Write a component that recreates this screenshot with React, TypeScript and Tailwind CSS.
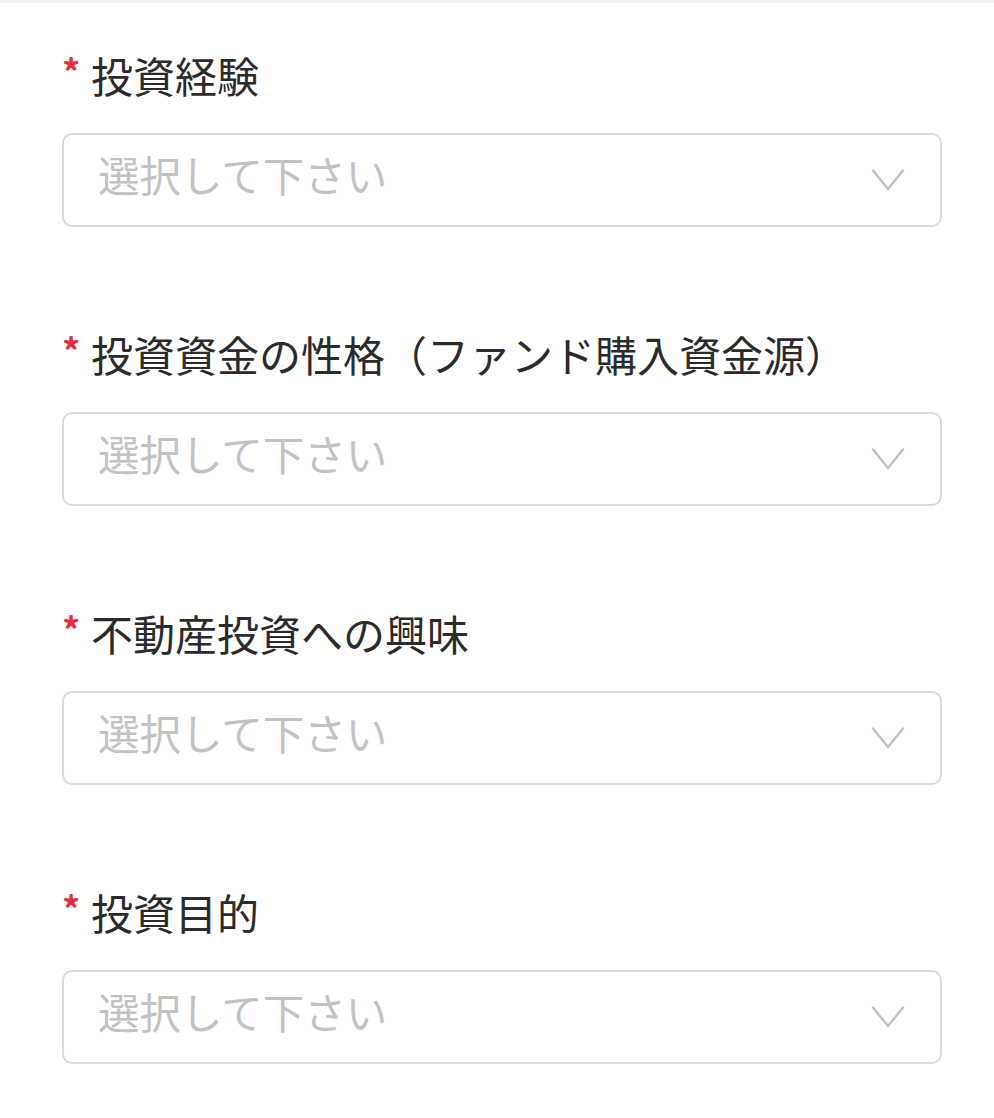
import React from "react";

const fields = [
  "投資経験",
  "投資資金の性格（ファンド購入資金源）",
  "不動産投資への興味",
  "投資目的",
];

function Chevron() {
  return (
    <svg width="34" height="22" viewBox="0 0 34 22" fill="none" className="shrink-0">
      <path d="M2 1.5 L17 20 L32 1.5" stroke="#c2c2c2" strokeWidth="2.4" strokeLinecap="round" strokeLinejoin="round" />
    </svg>
  );
}

export default function App() {
  return (
    <div
      className="w-[994px] h-[1118px] bg-white overflow-hidden"
      style={{ fontFamily: '"Noto Sans CJK JP", "Noto Sans", sans-serif' }}
    >
      <div className="h-[3px] bg-[#f1f1f3]" />
      <div className="pt-[43px] pl-[62px] flex flex-col gap-[98px]">
        {fields.map((f) => (
          <div key={f} className="flex flex-col gap-[30px]">
            <div className="flex items-center h-[57px] text-[42px] leading-[57px] text-[#2b2b2b]">
              <span className="text-[#e0303a] text-[36px] font-bold leading-none w-[29px] -mt-[10px]">*</span>
              <span>{f}</span>
            </div>
            <div className="w-[880px] h-[94px] rounded-[10px] border-[2.5px] border-[#dadada] flex items-center justify-between pl-[34px] pr-[35px]">
              <span className="text-[41.5px] text-[#c2c2c2] leading-none -mt-[10px]">選択して下さい</span>
              <Chevron />
            </div>
          </div>
        ))}
      </div>
    </div>
  );
}
